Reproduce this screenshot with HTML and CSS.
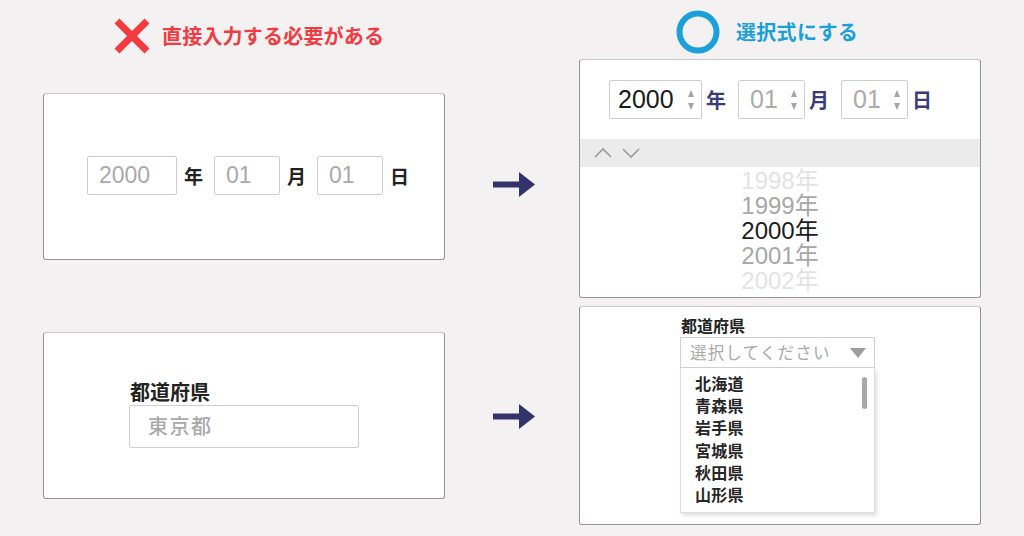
FILE: index.html
```html
<!DOCTYPE html>
<html lang="ja">
<head>
<meta charset="utf-8">
<title>入力フォーム比較</title>
<link rel="stylesheet" href="styles.css">
</head>
<body>
<div class="page">
  <div class="col col-left">
    <div class="head head-bad">
      <svg class="mark-x" width="38" height="38" viewBox="0 0 38 38"><path d="M4 4 L34 34 M34 4 L4 34" stroke="#f23a3f" stroke-width="7" fill="none"/></svg>
      <span class="head-text bad">直接入力する必要がある</span>
    </div>
    <div class="panel panel-date-plain">
      <div class="date-row">
        <div class="box box-year">2000</div><span class="unit">年</span>
        <div class="box box-md">01</div><span class="unit">月</span>
        <div class="box box-md">01</div><span class="unit last">日</span>
      </div>
    </div>
    <div class="panel panel-pref-plain">
      <div class="pref-plain">
        <div class="pref-label">都道府県</div>
        <div class="pref-input">東京都</div>
      </div>
    </div>
  </div>

  <div class="col col-mid">
    <svg class="arrow arrow-1" width="42" height="26" viewBox="0 0 42 26"><rect x="0" y="9.5" width="27" height="6" fill="#33336b"/><path d="M26 0 L42 12.5 L26 25 Z" fill="#33336b"/></svg>
    <svg class="arrow arrow-2" width="42" height="26" viewBox="0 0 42 26"><rect x="0" y="9.5" width="27" height="6" fill="#33336b"/><path d="M26 0 L42 12.5 L26 25 Z" fill="#33336b"/></svg>
  </div>

  <div class="col col-right">
    <div class="head head-good">
      <svg class="mark-o" width="44" height="44" viewBox="0 0 44 44"><circle cx="22" cy="22" r="18.5" stroke="#1ba0dc" stroke-width="6" fill="none"/></svg>
      <span class="head-text good">選択式にする</span>
    </div>
    <div class="panel panel-date-pick">
      <div class="spin-row">
        <div class="spin spin-year"><span class="spin-val dark">2000</span><span class="spin-arrows"><i class="up"></i><i class="down"></i></span></div><span class="unit navy">年</span>
        <div class="spin spin-md"><span class="spin-val">01</span><span class="spin-arrows"><i class="up"></i><i class="down"></i></span></div><span class="unit navy">月</span>
        <div class="spin spin-md"><span class="spin-val">01</span><span class="spin-arrows"><i class="up"></i><i class="down"></i></span></div><span class="unit navy last">日</span>
      </div>
      <div class="picker-bar">
        <svg width="50" height="14" viewBox="0 0 50 14"><path d="M1 12 L9 4 L17 12" stroke="#9a9a9a" stroke-width="1.6" fill="none"/><path d="M29 4 L37 12 L45 4" stroke="#9a9a9a" stroke-width="1.6" fill="none"/></svg>
      </div>
      <div class="year-list">
        <div class="yr far">1998年</div>
        <div class="yr near">1999年</div>
        <div class="yr sel">2000年</div>
        <div class="yr near">2001年</div>
        <div class="yr far">2002年</div>
      </div>
    </div>
    <div class="panel panel-pref-pick">
      <div class="pref-pick">
        <div class="pick-label">都道府県</div>
        <div class="select"><span class="select-text">選択してください</span><span class="tri"></span></div>
        <div class="dropdown">
          <ul class="options">
            <li>北海道</li>
            <li>青森県</li>
            <li>岩手県</li>
            <li>宮城県</li>
            <li>秋田県</li>
            <li>山形県</li>
          </ul>
          <span class="scrollbar"></span>
        </div>
      </div>
    </div>
  </div>
</div>
</body>
</html>
```

FILE: styles.css
```css
* { box-sizing: border-box; }
html, body {
  margin: 0;
  padding: 0;
  background: #f3f1f2;
  width: 1024px;
  height: 536px;
  overflow: hidden;
  font-family: "Liberation Sans", "Noto Sans CJK JP", sans-serif;
}
.page {
  display: flex;
  padding-left: 43px;
}
.col { display: flex; flex-direction: column; }
.col-left { width: 402px; }
.col-mid { width: 134px; padding-top: 172px; padding-left: 48px; }
.col-right { width: 402px; }

.head { display: flex; align-items: center; }
.head-bad { margin-top: 17px; height: 38px; padding-left: 70px; }
.head-good { margin-top: 10px; height: 44px; padding-left: 97px; }
.mark-x { display: block; }
.mark-o { display: block; }
.head-text {
  font-family: "Noto Sans CJK JP", sans-serif;
  font-weight: 700;
  font-size: 20px;
  line-height: 1;
}
.head-text.bad { color: #ef3b41; margin-left: 11px; letter-spacing: 0.2px; }
.head-text.good { color: #1a9fd8; margin-left: 16px; letter-spacing: 0.3px; }

.panel {
  background: #fff;
  border: 1px solid #959595;
  border-top-color: #c9c9c9;
  border-radius: 3px;
  overflow: hidden;
}
.panel-date-plain {
  margin-top: 38px;
  height: 167px;
  display: flex;
  align-items: center;
  justify-content: center;
  padding-left: 8px;
}
.date-row { display: flex; align-items: center; margin-top: -3px; }
.box {
  height: 39px;
  border: 1px solid #cfcfcf;
  border-radius: 2px;
  color: #a9a9a9;
  font-size: 23px;
  line-height: 37px;
  padding-left: 11px;
}
.box-year { width: 90px; }
.box-md { width: 66px; }
.unit {
  font-family: "Noto Sans CJK JP", sans-serif;
  font-weight: 700;
  font-size: 19px;
  color: #222;
  margin: 0 11px 0 7px;
  line-height: 1;
}
.unit.last { margin-right: 0; }

.panel-pref-plain {
  margin-top: 72px;
  height: 167px;
  display: flex;
  align-items: center;
  padding-left: 85px;
}
.pref-plain { margin-top: -4px; }
.pref-label {
  font-family: "Noto Sans CJK JP", sans-serif;
  font-weight: 700;
  font-size: 20px;
  color: #222;
  line-height: 24px;
  margin-left: 1px;
}
.pref-input {
  width: 230px;
  height: 43px;
  border: 1px solid #cfcfcf;
  border-radius: 2px;
  margin-top: 1px;
  font-family: "Noto Sans CJK JP", sans-serif;
  font-weight: 500;
  font-size: 20px;
  color: #a9a9a9;
  letter-spacing: 1.5px;
  line-height: 40px;
  padding-left: 18px;
}

.arrow { display: block; }
.arrow-2 { margin-top: 206px; }

.panel-date-pick {
  margin-top: 5px;
  height: 239px;
  display: flex;
  flex-direction: column;
}
.spin-row {
  display: flex;
  align-items: center;
  padding-left: 29px;
  margin-top: 20px;
  height: 39px;
}
.spin {
  height: 39px;
  border: 1px solid #cfcfcf;
  border-radius: 2px;
  display: flex;
  align-items: center;
  justify-content: space-between;
  padding: 0 7px 0 8px;
}
.spin-year { width: 93px; }
.spin-md { width: 67px; padding-left: 11px; }
.spin-val { font-size: 25px; color: #ababab; line-height: 1; }
.spin-val.dark { color: #1a1a1a; }
.spin-arrows { display: flex; flex-direction: column; align-items: center; gap: 6px; }
.spin-arrows i {
  display: block;
  width: 0; height: 0;
  border-left: 3.5px solid transparent;
  border-right: 3.5px solid transparent;
}
.spin-arrows .up { border-bottom: 7px solid #a5a5a5; }
.spin-arrows .down { border-top: 7px solid #a5a5a5; }
.unit.navy { color: #3b3b78; font-size: 20px; margin: 0 12px 0 4px; }
.unit.navy.last { margin-right: 0; }

.picker-bar {
  margin-top: 20px;
  height: 28px;
  background: #ebebeb;
  display: flex;
  align-items: center;
  padding-left: 14px;
}
.picker-bar svg { display: block; margin-top: -2px; }
.year-list {
  flex: 1;
  overflow: hidden;
  text-align: center;
  padding-top: 1px;
}
.yr {
  font-size: 24px;
  line-height: 25px;
  height: 25px;
}
.yr.far { color: #e3e3e3; }
.yr.near { color: #a7a7a7; }
.yr.sel { color: #1c1c1c; }

.panel-pref-pick {
  margin-top: 8px;
  height: 219px;
  padding-left: 100px;
  padding-top: 8px;
}
.pick-label {
  font-family: "Noto Sans CJK JP", sans-serif;
  font-weight: 700;
  font-size: 16px;
  color: #222;
  line-height: 20px;
  margin-left: 1px;
}
.select {
  margin-top: 2px;
  width: 195px;
  height: 31px;
  border: 1px solid #d0d0d0;
  display: flex;
  align-items: center;
  justify-content: space-between;
  padding: 0 8px 0 9px;
}
.select-text {
  font-family: "Noto Sans CJK JP", sans-serif;
  font-size: 16.5px;
  color: #a9a9a9;
  letter-spacing: 1.2px;
  line-height: 1;
}
.tri {
  width: 0; height: 0;
  border-left: 8px solid transparent;
  border-right: 8px solid transparent;
  border-top: 10px solid #9d9d9d;
}
.dropdown {
  position: relative;
  width: 195px;
  height: 145px;
  border: 1px solid #dcdcdc;
  border-top: none;
  background: #fff;
  box-shadow: 2px 3px 4px rgba(0,0,0,0.12);
}
.options {
  list-style: none;
  margin: 0;
  padding: 4px 0 0 14px;
}
.options li {
  font-family: "Noto Sans CJK JP", sans-serif;
  font-weight: 700;
  font-size: 16px;
  line-height: 22.2px;
  color: #262626;
  letter-spacing: 0.3px;
}
.scrollbar {
  position: absolute;
  right: 7px;
  top: 9px;
  width: 5px;
  height: 32px;
  border-radius: 3px;
  background: #a9a9a9;
}
```
